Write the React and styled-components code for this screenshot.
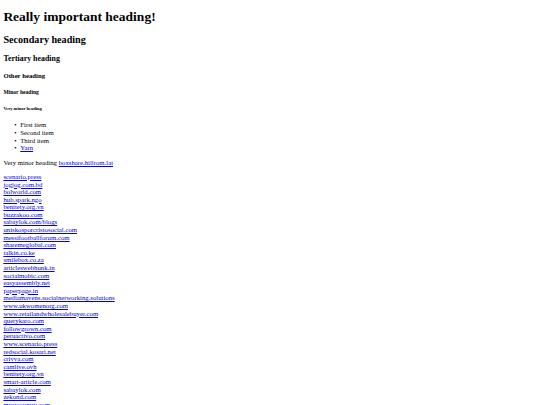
import React from "react";
import styled, { createGlobalStyle } from "styled-components";

// the reference is a plain unstyled page shown at a reduced scale
const S = 0.421875;
const px = (n) => `${(n * S).toFixed(2)}px`;

const GlobalStyle = createGlobalStyle`
  html, body {
    margin: 0;
    padding: 0;
    background: #ffffff;
  }
  body {
    font-family: "Liberation Serif", "Times New Roman", serif;
    font-size: ${px(16)};
    line-height: ${px(18)};
    color: #000000;
  }
`;

const Page = styled.div`
  margin: ${px(8)};
`;

const Heading = styled.h1`
  font-weight: bold;
  font-size: ${(p) => px(p.$size)};
  line-height: 1.15;
  margin: ${(p) => px(p.$gap)} 0;
`;

const List = styled.ul`
  list-style: none;
  margin: ${px(16)} 0;
  padding-left: ${px(40)};
`;

const Item = styled.li`
  &::before {
    content: "•";
    display: inline-block;
    width: 6px;
    margin-left: -6px;
  }
`;

const Paragraph = styled.p`
  margin: ${px(16)} 0;
`;

const Link = styled.a`
  color: #0000ee;
  text-decoration: underline;
`;

const LinkList = styled.div`
  display: flex;
  flex-direction: column;
  align-items: flex-start;
`;

const links = [
  "scenario.press",
  "jogjog.com.bd",
  "bolworld.com",
  "hub.spark.ngo",
  "benitety.org.vn",
  "buzzakoo.com",
  "sabaylok.com/blogs",
  "uniskosporcristosocial.com",
  "messifootballforum.com",
  "sharemeglobal.com",
  "talkin.co.ke",
  "smilebox.co.za",
  "articleswebhunk.in",
  "socialmobic.com",
  "easyassembly.net",
  "paperpage.in",
  "mediamavens.socialnetworking.solutions",
  "www.ukwomenorg.com",
  "www.retailandwholesalebuyer.com",
  "querykaro.com",
  "followgrown.com",
  "peruactivo.com",
  "www.scenario.press",
  "redsocial.kosari.net",
  "crivva.com",
  "camlive.ovh",
  "benitety.org.vn",
  "smart-article.com",
  "sabaylok.com",
  "zekond.com",
  "mystcountry.com",
];

const App = () => (
  <>
    <GlobalStyle />
    <Page>
      <Heading as="h1" $size={32} $gap={21.44}>
        Really important heading!
      </Heading>
      <Heading as="h2" $size={24} $gap={19.92}>
        Secondary heading
      </Heading>
      <Heading as="h3" $size={18.72} $gap={18.72}>
        Tertiary heading
      </Heading>
      <Heading as="h4" $size={16} $gap={21.28}>
        Other heading
      </Heading>
      <Heading as="h5" $size={13.28} $gap={22.18}>
        Minor heading
      </Heading>
      <Heading as="h6" $size={10.72} $gap={24.98}>
        Very minor heading
      </Heading>
      <List>
        <Item>First item</Item>
        <Item>Second item</Item>
        <Item>Third item</Item>
        <Item>
          <Link href="#">Yarn</Link>
        </Item>
      </List>
      <Paragraph>
        Very minor heading <Link href="#">boxshare.hillrom.lat</Link>
      </Paragraph>
      <LinkList>
        {links.map((name, i) => (
          <Link key={i} href="#">
            {name}
          </Link>
        ))}
      </LinkList>
    </Page>
  </>
);

export default App;
